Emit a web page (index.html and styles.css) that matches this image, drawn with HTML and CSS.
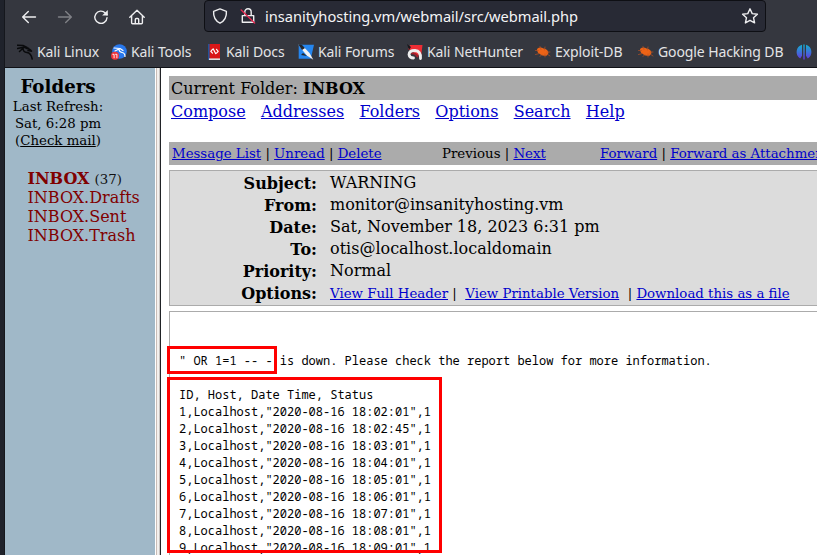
FILE: index.html
```
<!DOCTYPE html>
<html lang="en">
<head>
<meta charset="utf-8">
<title>SquirrelMail</title>
<link rel="stylesheet" href="styles.css">
</head>
<body>
<div class="edge"></div>
<div class="browser">
  <header class="chrome">
    <div class="toolbar">
      <nav class="nav">
        <svg width="16" height="16" viewBox="0 0 16 16"><path d="M14.5 8H2M7.3 2.5 1.700 8l5.600 5.500"/></svg>
        <svg class="off" width="16" height="16" viewBox="0 0 16 16"><path d="M1.500 8H14M8.700 2.500 14.300 8l-5.600 5.500"/></svg>
        <svg width="16" height="16" viewBox="0 0 16 16"><path d="M14 8.700A6.100 6.100 0 1 1 12.300 4L14 5.700"/><path class="solid" d="M14.800 1v5.600H9.200z"/></svg>
        <svg width="16" height="16" viewBox="0 0 16 16"><path d="M.8 8.200 8 1.300l7.200 6.900M2.600 7v6.800q0 1 1 1h8.800q1 0 1-1V7M6.300 14.500v-4q0-1 1-1h1.400q1 0 1 1v4"/></svg>
      </nav>
      <div class="url">
        <svg width="16" height="16" viewBox="0 0 16 16"><path d="M8 .9 14.400 3.300C14.700 8 13 12.800 8 15.200 3 12.800 1.300 8 1.600 3.300z"/></svg>
        <svg class="lock" width="16" height="16" viewBox="0 0 16 16"><path d="M4.800 7V4a3.200 3.200 0 0 1 6.400 0v3M2.300 7.600h11.400v6.600H2.300z"/><path class="slash" d="M1.200 2 14.600 15"/></svg>
        <span class="address">insanityhosting.vm/webmail/src/webmail.php</span>
        <svg class="star" width="18" height="18" viewBox="0 0 18 18"><path d="m9 1.800 2.200 4.800 5.200.6-3.900 3.500 1.100 5.200L9 13.300l-4.600 2.600 1.100-5.200-3.900-3.500 5.200-.6z"/></svg>
      </div>
    </div>
    <nav class="bookmarks">
      <a class="b1"><svg width="16" height="16" viewBox="0 0 16 16"><path class="dragon" d="M.5 1.200 6 1.400l4 2M.5 4.500l6-1.300 5 1M2.500 7.500 6 4.200q0 4 4 4.300 4 .4 5.200 6.500M9 4.200q4 .3 5.500 3L11 6.600"/></svg><span>Kali Linux</span></a>
      <a class="b2"><svg width="16" height="16" viewBox="0 0 16 16"><circle cx="8.500" cy="7.500" r="7.300" fill="#2878ee"/><path class="whiteline" d="m3 4 6 .5 3 2M4 7l4-2q0 3 3 3.500t3 4"/><circle cx="4" cy="11.800" r="4" fill="#ee3439"/><path class="tick" d="M1.800 10.300h1.300v3.500m1.500-3.500h1.300v3.500"/></svg><span>Kali Tools</span></a>
      <a class="b3"><svg width="16" height="16" viewBox="0 0 16 16"><path d="M2 0h12v16H2z" fill="#d91718"/><path d="M2 0h1.600v16H2z" fill="#23549a"/><path d="M3 14.400h11V16H3z" fill="#ddd"/><path class="whiteline" d="M6.500 5.300 4.800 7.300l1.700 1.800M10.500 5.300l1.700 2-1.700 1.800M7.300 4.900l2.300 4.700"/></svg><span>Kali Docs</span></a>
      <a class="b4"><svg width="16" height="16" viewBox="0 0 16 16"><path d="M.7.8H16l-3.200 14H.7z" fill="#2586ef"/><path d="m0 0 6.300 3.400 5.200 5.500 3.800 6.800-6.500-4.300-4.700-5.600z" fill="#f2f2f2"/><path d="m0 0 4 1 3 3-3 2zM5 9l4 3-6-1z" fill="#22252b"/></svg><span>Kali Forums</span></a>
      <a class="b5"><svg width="16" height="16" viewBox="0 0 16 16"><path d="M3 1h12.500l-1.500 12L1 5z" fill="#ed2d34"/><path d="m0 0 4 3-2 3z" fill="#17181c"/><path d="M13.500 14.500q.5-7.500-5.500-8Q2.200 6.500 2 10.500q.5 3.500 4.500 3.500" fill="none" stroke="#eee" stroke-width="2.800"/><path d="M5 9.500q3-1 5.500 3" fill="none" stroke="#a91f2a" stroke-width="1.800"/></svg><span>Kali NetHunter</span></a>
      <a class="b6"><svg width="16" height="16" viewBox="0 0 16 16"><path d="M2 5q3-2.500 6.500-.5Q13 5 13.500 9l-1.500 2.500q-4 1-6.500-1Q2 9 2 5z" fill="#ed6316"/><path class="legs" d="M.5 6.500h3M5 2.500l1 3m4-2.500-.5 3m5.500 2-3 0m3 4-3-2M.5 10.500l4-1M5 12.500l2-2m3 2.500v-3"/></svg><span>Exploit-DB</span></a>
      <a class="b7"><svg width="16" height="16" viewBox="0 0 16 16"><path d="M2 5q3-2.500 6.500-.5Q13 5 13.500 9l-1.500 2.500q-4 1-6.500-1Q2 9 2 5z" fill="#ed6316"/><path class="legs" d="M.5 6.500h3M5 2.500l1 3m4-2.500-.5 3m5.500 2-3 0m3 4-3-2M.5 10.500l4-1M5 12.500l2-2m3 2.500v-3"/></svg><span>Google Hacking DB</span></a>
      <a class="b8"><svg width="16" height="16" viewBox="0 0 16 16"><defs><linearGradient id="g" x2="0" y2="1"><stop stop-color="#12b1d0"/><stop offset="1" stop-color="#6634df"/></linearGradient></defs><path d="M6 .8v11l-1.800 2.600A7.500 7.500 0 0 1 6 .8zM7.300.5h1.400v15H7.300zM10 .8v11l1.800 2.600A7.500 7.500 0 0 0 10 .8z" fill="url(#g)"/></svg></a>
    </nav>
  </header>
  <div class="frames">
    <aside class="side">
      <div class="status">
        <h1>Folders</h1>
        <p>Last Refresh:</p>
        <p>Sat, 6:28 pm</p>
        <p>(<a>Check mail</a>)</p>
      </div>
      <ul class="folders">
        <li><b>INBOX</b> <small>(37)</small></li>
        <li>INBOX.Drafts</li>
        <li>INBOX.Sent</li>
        <li>INBOX.Trash</li>
      </ul>
    </aside>
    <div class="splitter"></div>
    <main class="mail">
      <div class="current">Current Folder: <b>INBOX</b></div>
      <nav class="menu"><a>Compose</a><a>Addresses</a><a>Folders</a><a>Options</a><a>Search</a><a>Help</a></nav>
      <div class="actions">
        <span class="left"><a>Message List</a> | <a>Unread</a> | <a>Delete</a></span>
        <span class="mid">Previous | <a>Next</a></span>
        <span><a>Forward</a> | <a>Forward as Attachment</a></span>
      </div>
      <dl class="headers">
        <dt>Subject:</dt><dd>WARNING</dd>
        <dt>From:</dt><dd>monitor@insanityhosting.vm</dd>
        <dt>Date:</dt><dd>Sat, November 18, 2023 6:31 pm</dd>
        <dt>To:</dt><dd>otis@localhost.localdomain</dd>
        <dt>Priority:</dt><dd>Normal</dd>
        <dt>Options:</dt><dd class="opts"><a>View Full Header</a> |&nbsp; <a>View Printable Version</a>&nbsp; | <a>Download this as a file</a></dd>
      </dl>
      <div class="body">
<pre>" OR 1=1 -- - is down. Please check the report below for more information.

ID, Host, Date Time, Status
1,Localhost,"2020-08-16 18:02:01",1
2,Localhost,"2020-08-16 18:02:45",1
3,Localhost,"2020-08-16 18:03:01",1
4,Localhost,"2020-08-16 18:04:01",1
5,Localhost,"2020-08-16 18:05:01",1
6,Localhost,"2020-08-16 18:06:01",1
7,Localhost,"2020-08-16 18:07:01",1
8,Localhost,"2020-08-16 18:08:01",1
9,Localhost,"2020-08-16 18:09:01",1</pre>
        <div class="mark mark-query"></div>
        <div class="mark mark-rows"></div>
      </div>
    </main>
  </div>
</div>
</body>
</html>
```
FILE: styles.css
```
* { box-sizing: border-box; }
body { margin: 0; width: 817px; height: 555px; overflow: hidden; display: flex; background: #fff; color: #000; font: 16px/19px "DejaVu Serif", serif; }
p, h1, ul, dl, dd, pre { margin: 0; padding: 0; }
.edge { width: 5px; flex: none; background: #1f222b; border-right: 1px solid #15171d; }
.browser { width: 812px; flex: none; display: flex; flex-direction: column; }

.chrome { height: 68px; flex: none; background: #35373f; border-bottom: 1px solid #101116; color: #e3e4e6; font-family: "Noto Sans", sans-serif; overflow: hidden; }
.chrome svg { flex: none; fill: none; stroke: #eeeef0; stroke-width: 1.4; stroke-linejoin: round; stroke-linecap: round; }
.toolbar { height: 32px; display: flex; }
.nav { width: 199px; padding: 1px 0 0 16px; display: flex; gap: 20px; align-items: center; }
.nav .off { opacity: .4; }
.chrome svg .solid { fill: #eeeef0; stroke: none; }
.url { width: 562px; height: 32px; display: flex; align-items: center; background: #282a35; border: 1px solid #0e0f14; border-radius: 4px; padding: 0 6px 0 7px; }
.lock { margin-left: 12px; }
.chrome svg .slash { stroke: #e22850; }
.address { font-size: 14.67px; letter-spacing: -.04px; margin-left: 9px; white-space: nowrap; color: #f4f4f6; width: 314px; }
.star { margin-left: auto; }

.bookmarks { height: 35px; display: flex; padding: 4px 0 0 12px; font-size: 14px; letter-spacing: -.1px; }
.bookmarks a { display: flex; align-items: center; gap: 4px; flex: none; white-space: nowrap; }
.bookmarks svg { stroke: none; }
.b1 { width: 94px; }
.b2 { width: 95px; }
.b3 { width: 92px; }
.b4 { width: 109px; }
.b5 { width: 128px; }
.b6 { width: 103px; }
.b7 { width: 158px; }
.chrome svg .dragon { stroke: #090a0c; stroke-width: 1.5; }
.chrome svg .whiteline { stroke: #fff; stroke-width: 1.2; }
.chrome svg .tick { stroke: #fff; stroke-width: .9; }
.chrome svg .legs { stroke: #b95324; stroke-width: .7; }

.frames { flex: 1; display: flex; min-height: 0; }
.side { width: 150px; flex: none; background: #a0b8c8; }
.status { width: 106px; padding-top: 8px; text-align: center; font-size: 13.33px; line-height: 17px; white-space: nowrap; }
.status h1 { font-size: 18.2px; line-height: 22px; }
.status a { text-decoration: underline; }
.folders { list-style: none; padding: 20px 0 0 22.5px; color: #800000; white-space: nowrap; }
.folders li { height: 19px; }
.folders small { font-size: 13.33px; color: #111; }
.splitter { width: 6px; flex: none; background: #f3f0ee; border-left: 1px solid #fff; border-right: 1px solid #202226; box-shadow: inset 1px 0 #c9bdb7, inset -1px 0 #c9c5c2; }

.mail { width: 656px; flex: none; padding: 8px 0 0 8px; overflow: hidden; }
.mail a { color: #0000cc; text-decoration: underline; }
.current { height: 24px; line-height: 26px; padding-left: 2px; background: #ababab; }
.menu { display: flex; gap: 15.3px; padding: 2px 0 0 2px; height: 42px; }
.actions { display: flex; height: 23px; line-height: 23px; padding-left: 3px; background: #ababab; font-size: 13.33px; white-space: nowrap; }
.left { width: 270px; padding-right: 0; }
.mid { width: 158px; }
.actions .left { width: 270px; }
.actions .mid { margin: 0; }
.headers { display: grid; grid-template-columns: 147px 1fr; column-gap: 13px; grid-auto-rows: 22px; line-height: 22px; height: 136px; width: 660px; margin-top: 5px; padding-top: 2px; background: #dcdcdc; border: 1px solid #ababab; white-space: nowrap; }
.headers dt { text-align: right; font-weight: bold; }
.headers dd { line-height: 20px; }
.headers .opts { font-size: 13.33px; line-height: 22px; }
.body { position: relative; width: 660px; height: 300px; margin-top: 5px; border: 1px solid #ababab; padding: 40px 0 0 9px; }
.body pre { font: 12px/17px "Noto Sans Mono", "DejaVu Sans Mono", monospace; }
.mark { position: absolute; border: 3px solid #f00; }
.mark-query { left: -3px; top: 34px; width: 110px; height: 28px; }
.mark-rows { left: -3px; top: 65px; width: 275px; height: 176px; }
.actions span { flex: none; }
```
